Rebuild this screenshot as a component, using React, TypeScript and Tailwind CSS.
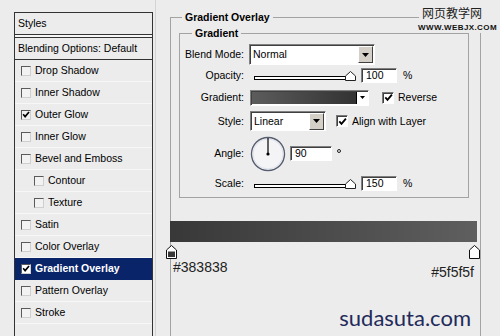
import type { ReactNode } from 'react'

// Photoshop "Layer Style" dialog, Gradient Overlay pane.

const STYLES = [
  { label: 'Drop Shadow' },
  { label: 'Inner Shadow' },
  { label: 'Outer Glow', on: true },
  { label: 'Inner Glow' },
  { label: 'Bevel and Emboss' },
  { label: 'Contour', sub: true },
  { label: 'Texture', sub: true },
  { label: 'Satin' },
  { label: 'Color Overlay' },
  { label: 'Gradient Overlay', on: true, active: true },
  { label: 'Pattern Overlay' },
  { label: 'Stroke' },
]

function Tick() {
  return (
    <svg width={9} height={9} viewBox="0 0 9 9" aria-hidden="true">
      <path d="M1.3 4.3 3.5 6.9 7.9 1.6" fill="none" stroke="#000" strokeWidth={1.8} />
    </svg>
  )
}

function ListBox({ on, bright }: { on?: boolean; bright?: boolean }) {
  return (
    <span className={`flex h-[10px] w-[10px] shrink-0 items-center justify-center border border-t-[#5a5a5a] border-l-[#5a5a5a] border-r-[#cfcfcf] border-b-[#cfcfcf] ${bright ? 'bg-white' : 'bg-[#f2f2f2]'}`}>
      {on && <Tick />}
    </span>
  )
}

function Box({ on }: { on?: boolean }) {
  return (
    <span className="flex h-[12px] w-[12px] shrink-0 items-center justify-center border border-t-[#7a7a7a] border-l-[#7a7a7a] border-r-white border-b-white bg-white shadow-[inset_1px_1px_0_#404040]">
      {on && <Tick />}
    </span>
  )
}

function Sunken({ className, children }: { className: string; children?: ReactNode }) {
  return (
    <div className={`flex items-center border border-t-[#808080] border-l-[#808080] border-r-white border-b-white bg-white shadow-[inset_1px_1px_0_#404040] ${className}`}>
      {children}
    </div>
  )
}

function ArrowBtn() {
  return (
    <span className="ml-auto mr-px flex h-[17px] w-[15px] items-center justify-center border border-t-white border-l-white border-r-[#404040] border-b-[#404040] bg-[#d4d0c8]">
      <svg width={7} height={4} viewBox="0 0 7 4"><path d="M0 0h7L3.5 4z" fill="#000" /></svg>
    </span>
  )
}

function Slider() {
  return (
    <div className="relative ml-[10px] h-[15px] w-[102px]">
      <div className="absolute left-0 right-[4px] top-[8px] h-[4px] border border-black bg-white" />
      <svg className="absolute right-0 top-[3px]" width={11} height={10} viewBox="0 0 11 10">
        <path d="M5.5 0.5 10.5 5v4.5H0.5V5z" fill="#fff" stroke="#222" />
      </svg>
    </div>
  )
}

function Stop({ fill }: { fill?: string }) {
  return (
    <svg width={11} height={14} viewBox="0 0 11 14">
      <path d="M5.5 0.5 10.5 5v8.5H0.5V5z" fill="#fff" stroke="#111" />
      {fill && <rect x={2} y={6.5} width={7} height={5.5} fill={fill} />}
    </svg>
  )
}

export default function App() {
  return (
    <div className="relative flex h-[336px] w-[500px] overflow-hidden bg-[#ececec] font-['Liberation_Sans',Arial,sans-serif] text-[10.5px] leading-none text-black">
      {/* styles list */}
      <div className="pl-[14px] pt-[12px]">
        <div className="h-[340px] w-[139px] border border-[#333]">
          <div className="flex h-[21px] items-center pl-[3px]">Styles</div>
          <div className="h-[4px] border-y border-[#333] bg-[#f6f6f6]" />
          <div className="flex h-[22px] items-center border-b border-[#333] pl-[3px]">Blending Options: Default</div>
          {STYLES.map((s) => (
            <div
              key={s.label}
              className={`flex h-[22px] items-center gap-[4px] border-b ${s.sub ? 'pl-[19px]' : 'pl-[6px]'} ${s.active ? 'border-[#0a246a] bg-[#0a246a] font-bold text-white' : 'border-[#f7f7f7]'}`}
            >
              <ListBox on={s.on} bright={s.active} />
              {s.label}
            </div>
          ))}
        </div>
      </div>
      <div className="ml-[2px] w-px self-stretch bg-[#d4d4d4]" />

      {/* gradient overlay pane */}
      <fieldset className="ml-[14px] mt-[10px] h-[340px] w-[309px] border border-[#a3a3a3]">
        <legend className="ml-[11px] px-[3px] font-bold leading-[14px]">Gradient Overlay</legend>

        <fieldset className="ml-[8px] mt-[2px] w-[290px] border border-[#a3a3a3] pb-[6px]">
          <legend className="ml-[12px] px-[3px] font-bold leading-[14px]">Gradient</legend>

          <div className="mt-[4px] flex h-[21px] items-center">
            <span className="w-[64px] text-right">Blend Mode:</span>
            <Sunken className="ml-[5px] h-[21px] w-[126px] pl-[3px]">
              Normal
              <ArrowBtn />
            </Sunken>
          </div>

          <div className="mt-[3px] flex h-[15px] items-center">
            <span className="w-[64px] text-right">Opacity:</span>
            <Slider />
            <Sunken className="ml-[5px] h-[15px] w-[36px] pl-[4px]">100</Sunken>
            <span className="ml-[6px]">%</span>
          </div>

          <div className="mt-[7px] flex h-[15px] items-center">
            <span className="w-[64px] text-right">Gradient:</span>
            <Sunken className="ml-[6px] h-[16px] w-[119px]">
              <span className="ml-px h-[12px] w-[104px] bg-linear-to-r from-[#5c5c5c] to-[#333]" />
              <span className="flex h-[12px] flex-1 items-center justify-center border-l border-black">
                <svg width={5} height={3} viewBox="0 0 5 3"><path d="M0 0h5L2.5 3z" fill="#000" /></svg>
              </span>
            </Sunken>
            <span className="ml-[13px]"><Box on /></span>
            <span className="ml-[4px]">Reverse</span>
          </div>

          <div className="mt-[6px] flex h-[20px] items-center">
            <span className="w-[64px] text-right">Style:</span>
            <Sunken className="ml-[6px] h-[20px] w-[76px] pl-[3px]">
              Linear
              <ArrowBtn />
            </Sunken>
            <span className="ml-[10px]"><Box on /></span>
            <span className="ml-[4px]">Align with Layer</span>
          </div>

          <div className="mt-[5px] flex h-[35px] items-center">
            <span className="w-[64px] text-right">Angle:</span>
            <svg className="ml-[6px]" width={36} height={36} viewBox="0 0 36 36">
              <circle cx={18} cy={18} r={16.5} fill="#f4f4f6" stroke="#565d70" strokeWidth={1.4} />
              <circle cx={18} cy={18} r={15} fill="none" stroke="#dfe2ea" strokeWidth={1} />
              <path d="M18 18V2" stroke="#000" strokeWidth={1.2} />
              <circle cx={18} cy={18} r={1.6} fill="#000" />
            </svg>
            <Sunken className="ml-[4px] h-[15px] w-[42px] pl-[4px]">90</Sunken>
            <span className="-mt-[6px] ml-[5px] h-[4px] w-[4px] rounded-full border border-[#222]" />
          </div>

          <div className="mt-[5px] flex h-[15px] items-center">
            <span className="w-[64px] text-right">Scale:</span>
            <Slider />
            <Sunken className="ml-[5px] h-[15px] w-[36px] pl-[4px]">150</Sunken>
            <span className="ml-[6px]">%</span>
          </div>
        </fieldset>

        <div className="-ml-px mt-[23px] h-[21px] w-[307px] bg-linear-to-r from-[#383838] to-[#5f5f5f]" />
        <div className="-ml-[5px] mt-[3px] flex w-[314px] justify-between">
          <Stop fill="#383838" />
          <Stop />
        </div>
        <div className="flex justify-between text-[14px] leading-[14px] text-[#222]">
          <span className="ml-[2px] mt-[1px]">#383838</span>
          <span className="mr-[6px] mt-[6px]">#5f5f5f</span>
        </div>
        <div className="mt-[28px] pr-[9px] text-right font-['Lato',sans-serif] text-[22px] leading-[22px] text-[#1f2b5b]">sudasuta.com</div>
      </fieldset>

      {/* watermark */}
      <div className="absolute left-[419px] top-0 flex h-[33px] w-[81px] flex-col items-start bg-[#ececec] pl-[3px] pt-[7px]">
        <span className="font-['Noto_Sans_CJK_SC',sans-serif] text-[12px] leading-[12px] text-[#222]">网页教学网</span>
        <span className="-ml-[4px] mt-[5px] text-[8px] font-bold leading-[8px] tracking-[0.4px] text-[#111]">WWW.WEBJX.COM</span>
      </div>
    </div>
  )
}
